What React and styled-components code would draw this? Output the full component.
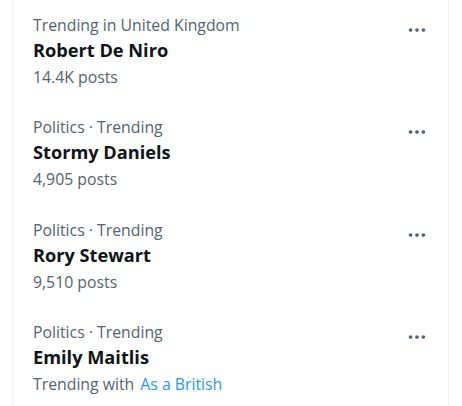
import React from "react";
import styled, { createGlobalStyle } from "styled-components";

const Global = createGlobalStyle`
  html, body { margin: 0; padding: 0; background: #ffffff; }
  body { font-family: "Open Sans", "Noto Sans", Arial, sans-serif; }
`;

const Panel = styled.div`
  margin-left: 12px;
  width: 437px;
  border-left: 1px solid #eff3f4;
  border-right: 1px solid #eff3f4;
  height: 406px;
  overflow: hidden;
  box-sizing: border-box;
`;

const Item = styled.div`
  display: flex;
  justify-content: space-between;
  align-items: flex-start;
  padding: 14px 20px 14px 20px;
  height: 102.3px;
  box-sizing: border-box;
`;

const Texts = styled.div`
  display: flex;
  flex-direction: column;
`;

const Category = styled.div`
  color: #536471;
  font-size: 15.8px;
  line-height: 22px;
`;

const Name = styled.div`
  color: #0f1419;
  font-size: 18.2px;
  font-weight: 700;
  line-height: 26px;
  margin-top: 1px;
`;

const Meta = styled.div`
  color: #536471;
  font-size: 15.8px;
  line-height: 22px;
  margin-top: 3px;
`;

const Link = styled.span`
  color: #1d9bf0;
  margin-left: 6px;
`;

const More = styled.div`
  width: 22px;
  height: 22px;
  margin-top: 5px;
  color: #536471;
  display: flex;
`;

const Dots = () => (
  <svg viewBox="0 0 24 24" width="22" height="22" fill="currentColor">
    <path d="M3 12c0-1.1.9-2 2-2s2 .9 2 2-.9 2-2 2-2-.9-2-2zm9 2c1.1 0 2-.9 2-2s-.9-2-2-2-2 .9-2 2 .9 2 2 2zm7 0c1.1 0 2-.9 2-2s-.9-2-2-2-2 .9-2 2 .9 2 2 2z" />
  </svg>
);

const trends = [
  { cat: "Trending in United Kingdom", name: "Robert De Niro", meta: "14.4K posts" },
  { cat: "Politics · Trending", name: "Stormy Daniels", meta: "4,905 posts" },
  { cat: "Politics · Trending", name: "Rory Stewart", meta: "9,510 posts" },
  { cat: "Politics · Trending", name: "Emily Maitlis", meta: "Trending with", link: "As a British" },
];

export default function App() {
  return (
    <>
      <Global />
      <Panel>
        {trends.map((t) => (
          <Item key={t.name}>
            <Texts>
              <Category>{t.cat}</Category>
              <Name>{t.name}</Name>
              <Meta>
                {t.meta}
                {t.link && <Link>{t.link}</Link>}
              </Meta>
            </Texts>
            <More><Dots /></More>
          </Item>
        ))}
      </Panel>
    </>
  );
}
